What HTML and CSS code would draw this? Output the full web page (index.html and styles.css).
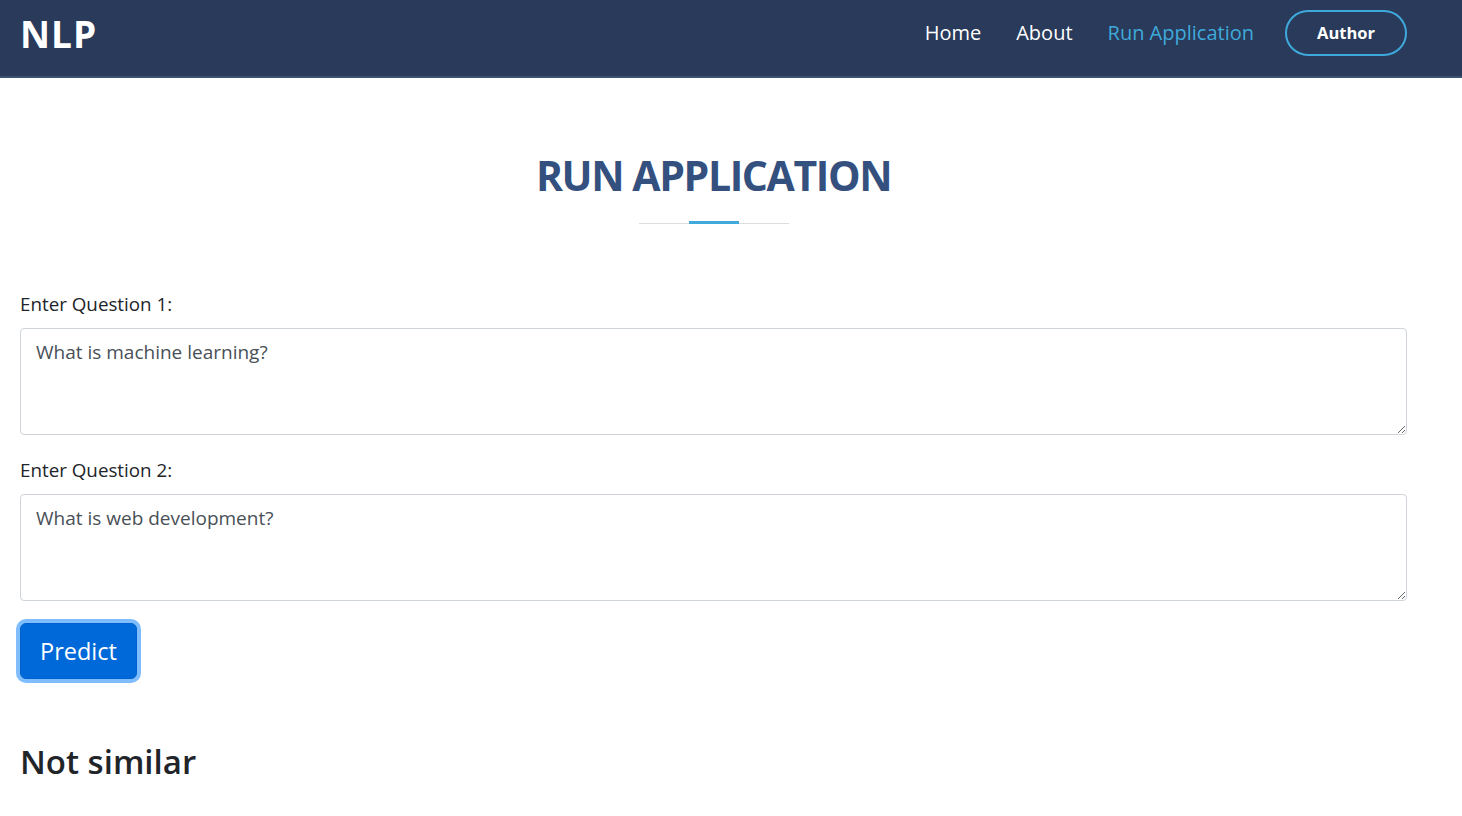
FILE: index.html
```html
<!DOCTYPE html>
<html lang="en">
<head>
<meta charset="utf-8">
<title>NLP - Run Application</title>
<link rel="stylesheet" href="styles.css">
</head>
<body>
<header class="topbar">
  <div class="brand">NLP</div>
  <nav class="nav">
    <a class="nav-link" href="#">Home</a>
    <a class="nav-link" href="#">About</a>
    <a class="nav-link active" href="#">Run Application</a>
    <a class="nav-btn" href="#">Author</a>
  </nav>
</header>
<main class="content">
  <section class="section-title">
    <h2>RUN APPLICATION</h2>
    <div class="title-line"><span></span></div>
  </section>
  <form class="qform">
    <label class="qlabel">Enter Question 1:</label>
    <textarea class="qinput" rows="3">What is machine learning?</textarea>
    <label class="qlabel">Enter Question 2:</label>
    <textarea class="qinput" rows="3">What is web development?</textarea>
    <div class="btn-row"><button type="button" class="btn-predict">Predict</button></div>
  </form>
  <h3 class="result">Not similar</h3>
</main>
</body>
</html>
```
FILE: styles.css
```css
* { box-sizing: border-box; }
body {
  margin: 0;
  background: #fff;
  font-family: "Open Sans", "Noto Sans", sans-serif;
  color: #212529;
}
.topbar {
  height: 78px;
  background: #293a5a;
  border-bottom: 2px solid #3f5170;
  display: flex;
  align-items: center;
  justify-content: space-between;
  padding: 0 55px 0 20px;
}
.brand {
  color: #fff;
  font-family: "Open Sans", sans-serif;
  font-weight: 700;
  font-size: 37px;
  letter-spacing: 1px;
  margin-top: -9px;
}
.nav {
  display: flex;
  align-items: center;
  margin-top: -11px;
}
.nav-link {
  color: #fff;
  text-decoration: none;
  font-size: 20px;
  margin-left: 35px;
}
.nav-link:first-child { margin-left: 0; }
.nav-link.active { color: #3fa9db; }
.nav-btn {
  margin-left: 31px;
  width: 122px;
  height: 46px;
  border: 2px solid #3fa9db;
  border-radius: 24px;
  color: #fff;
  font-weight: 700;
  font-size: 16.5px;
  text-decoration: none;
  display: flex;
  align-items: center;
  justify-content: center;
}
.content {
  padding: 0 55px 0 20px;
}
.section-title {
  padding-top: 68px;
  text-align: center;
}
.section-title h2 {
  margin: 0;
  font-family: "Open Sans", sans-serif;
  font-weight: 700;
  font-size: 41px;
  letter-spacing: -1.4px;
  line-height: 58px;
  color: #34507e;
}
.title-line {
  width: 150px;
  height: 1px;
  background: #ddd;
  margin: 19px auto 0;
  position: relative;
}
.title-line span {
  position: absolute;
  left: 50px;
  top: -2px;
  width: 50px;
  height: 3px;
  background: #3fa9db;
}
.qform {
  margin-top: 67px;
  display: flex;
  flex-direction: column;
}
.qlabel {
  font-size: 18.8px;
  line-height: 27px;
  margin-bottom: 10px;
}
.qinput {
  width: 100%;
  height: 107px;
  border: 1px solid #ced4da;
  border-radius: 4px;
  padding: 8px 15px;
  font-family: inherit;
  font-size: 19px;
  line-height: 30px;
  color: #495057;
  margin-bottom: 22px;
  resize: vertical;
}
.qinput:last-of-type { margin-bottom: 0; }
.btn-row {
  margin-top: 22px;
  display: flex;
}
.btn-predict {
  background: #0069d9;
  color: #fff;
  border: 1px solid #0062cc;
  border-radius: 6px;
  font-family: inherit;
  font-size: 23.5px;
  padding: 0 19px;
  height: 56px;
  box-shadow: 0 0 0 4px #80bdff;
  cursor: pointer;
}
.result {
  margin: 63px 0 0;
  font-size: 33px;
  font-weight: 600;
  line-height: 40px;
}
```
